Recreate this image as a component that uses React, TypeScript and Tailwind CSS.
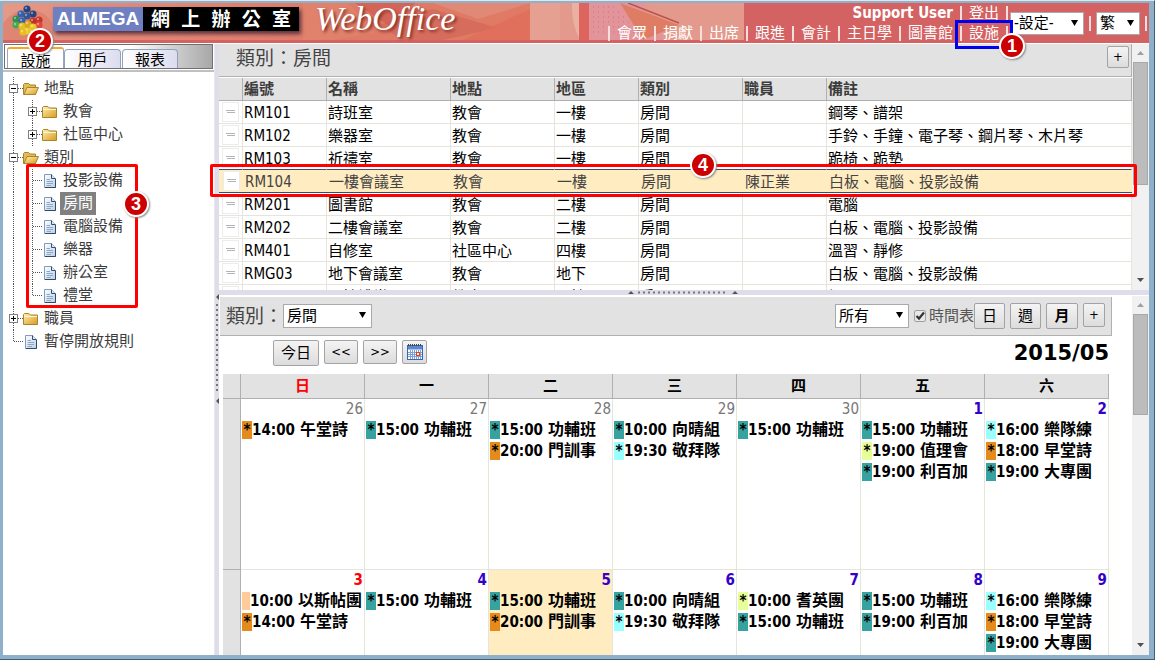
import React from "react";

const FONT =
  "font-['DejaVu_Sans_Condensed','Noto_Sans_CJK_TC',sans-serif] text-[15px] leading-5 text-black";

/* ---------- shared controls ---------- */

type ButtonProps = {
  children: React.ReactNode;
  className?: string;
  label?: string;
};

function Button({ children, className = "", label }: ButtonProps) {
  return (
    <button
      type="button"
      aria-label={label}
      className={`flex shrink-0 items-center justify-center rounded-[2px] border border-[#a3a3a3] bg-linear-to-b from-[#f4f4f4] to-[#dcdcdc] ${className}`}
    >
      {children}
    </button>
  );
}

type SelectProps = { label: string; options: string[]; className?: string };

function Select({ label, options, className = "" }: SelectProps) {
  return (
    <span className={`relative inline-flex shrink-0 ${className}`}>
      <select
        aria-label={label}
        className="h-full w-full appearance-none border border-[#a9a9a9] bg-white pl-[3px] text-black"
      >
        {options.map((o) => (
          <option key={o}>{o}</option>
        ))}
      </select>
      <svg
        viewBox="0 0 7 6"
        className="pointer-events-none absolute top-2 right-1.5 h-1.5 w-[7px]"
        aria-hidden="true"
      >
        <path d="M0 0H7L3.500 6Z" fill="#000" />
      </svg>
    </span>
  );
}

function ScrollBar({ thumb }: { thumb: string }) {
  return (
    <div className="flex w-[17px] shrink-0 flex-col items-center bg-[#f1f1f1]">
      <svg viewBox="0 0 17 18" className="h-[18px] w-[17px] shrink-0" aria-hidden="true">
        <path d="M5 11L8.500 7L12 11Z" fill="#a0a0a0" />
      </svg>
      <div className={`w-[15px] shrink-0 border border-[#a8a8a8] bg-[#bcbcbc] ${thumb}`} />
      <svg viewBox="0 0 17 18" className="mt-auto h-[18px] w-[17px] shrink-0" aria-hidden="true">
        <path d="M5 6L8.500 10L12 6Z" fill="#505050" />
      </svg>
    </div>
  );
}

/* ---------- header ---------- */

function HeaderArt() {
  return (
    <svg
      viewBox="0 0 741 37"
      preserveAspectRatio="none"
      className="absolute top-0 left-0 h-[37px] w-[741px]"
      aria-hidden="true"
    >
      <defs>
        <linearGradient id="art" x1="0" x2="1">
          <stop offset="0" stopColor="#e39a88" />
          <stop offset="0.12" stopColor="#e58b77" />
          <stop offset="0.45" stopColor="#de7a66" />
          <stop offset="0.7" stopColor="#e07a64" />
          <stop offset="0.88" stopColor="#e39a8c" />
          <stop offset="1" stopColor="#e39a8c" />
        </linearGradient>
      </defs>
      <rect width="741" height="37" fill="url(#art)" />
      <path d="M0 20Q14 2 34 8T50 37H0Z" fill="#d97360" opacity="0.5" />
      <path d="M300 0H345L372 30L330 37H300Z" fill="#e0846e" opacity="0.7" />
      <path d="M352 0H412L388 24Z" fill="#c9574f" opacity="0.6" />
      <path d="M375 22L430 6L495 25L440 37H400Z" fill="#c85b50" opacity="0.4" />
      <path d="M430 0H527L475 16Z" fill="#e0907e" opacity="0.7" />
      <path d="M460 37L527 6V37Z" fill="#df6c58" opacity="0.7" />
      <rect x="527" width="50" height="37" fill="#e39a8c" />
      <rect x="527" width="30" height="37" fill="#e6a092" />
      <path d="M569 0H576V37H577Q568 20 569 0Z" fill="#eab0a2" />
      <rect x="576" width="10" height="37" fill="#dd655d" />
      <path d="M586 0H640L660 37H586Z" fill="#e2949a" />
      <path d="M617 0L676 22L640 37Z" fill="#df7d64" />
      <path d="M625 0L676 20" stroke="#b8564c" strokeWidth="1.500" />
      <path
        d="M590 4H612M590 9H618M590 14H624M590 19H628M590 24H632M590 29H636"
        stroke="#c9707a"
        strokeDasharray="1 4"
      />
    </svg>
  );
}

function LogoMark() {
  const balls: [number, number, string][] = [
    [16, 5, "#26437f"],
    [10, 10, "#3561ad"],
    [22, 10, "#26437f"],
    [16, 12, "#2f5597"],
    [5, 15, "#2f8f4f"],
    [11, 17, "#3561ad"],
    [22, 17, "#c03028"],
    [28, 16, "#c8342a"],
    [5, 21, "#49a84f"],
    [28, 21, "#e2463a"],
    [11, 22, "#e6c020"],
    [17, 20, "#d8a818"],
    [22, 23, "#e8c828"],
    [16, 27, "#f0d030"],
    [12, 28, "#e6c020"],
    [21, 28, "#e6c020"],
  ];
  return (
    <svg viewBox="0 0 34 34" className="h-[34px] w-[34px] shrink-0" aria-hidden="true">
      {balls.map(([x, y, c]) => (
        <g key={`${x}-${y}`}>
          <circle cx={x} cy={y} r="3.600" fill={c} />
          <circle cx={x - 1} cy={y - 1} r="1.200" fill="#fff" opacity="0.4" />
        </g>
      ))}
    </svg>
  );
}

function Bar() {
  return <span className="h-[15px] w-0.5 shrink-0 bg-[#f4dede]" />;
}

function NavLine({ items }: { items: string[] }) {
  return (
    <>
      {items.map((t) => (
        <React.Fragment key={t}>
          <Bar />
          <a href="#" className="shrink-0 whitespace-nowrap">
            {t}
          </a>
        </React.Fragment>
      ))}
      <Bar />
    </>
  );
}

function Header() {
  return (
    <header className="relative flex h-10 shrink-0 bg-[#d46262] text-white">
      <HeaderArt />
      <div className="relative flex h-8 items-center">
        <div className="w-[50px] pt-1 pl-2">
          <LogoMark />
        </div>
        <div className="flex h-6 items-stretch bg-[#6f80c2] shadow-[2px_3px_4px_#5a3040]">
          <span className="flex w-[90px] items-center justify-center font-['Liberation_Sans',sans-serif] text-[19px] font-bold">
            ALMEGA
          </span>
          <span className="flex w-[156px] items-center justify-between bg-black px-2 text-[19px] font-bold">
            {"網上辦公室".split("").map((c) => (
              <span key={c}>{c}</span>
            ))}
          </span>
        </div>
        <span className="pl-4 font-['Liberation_Serif',serif] text-[34px] leading-10 italic [text-shadow:2px_2px_3px_#803028]">
          WebOffice
        </span>
      </div>
      <nav className="relative ml-auto flex flex-col items-end">
        <div className="flex h-5 items-center gap-[7px]">
          <span className="font-bold whitespace-nowrap">Support User</span>
          <NavLine items={["登出"]} />
        </div>
        <div className="flex h-5 items-center gap-[7px]">
          <NavLine
            items={["會眾", "捐獻", "出席", "跟進", "會計", "主日學", "圖書館", "設施"]}
          />
        </div>
      </nav>
      <div className="relative flex items-center gap-[5px] px-0.5">
        <Select label="設定" options={["-設定-"]} className="h-[23px] w-[74px]" />
        <Bar />
        <Select label="語言" options={["繁"]} className="h-[23px] w-11" />
        <Bar />
      </div>
    </header>
  );
}

/* ---------- sidebar ---------- */

type Guide = "line" | "tee" | "end" | "minus" | "plus" | "blank";

function GuideCell({ kind }: { kind: Guide }) {
  const box = kind === "minus" || kind === "plus";
  return (
    <svg viewBox="0 0 19 23" className="h-[23px] w-[19px] shrink-0" aria-hidden="true">
      {kind !== "blank" && (
        <path
          d={kind === "end" ? "M9.500 0V12" : "M9.500 0V23"}
          stroke="#555"
          strokeDasharray="1 1"
        />
      )}
      {kind !== "blank" && kind !== "line" && (
        <path d="M10 11.500H19" stroke="#555" strokeDasharray="1 1" />
      )}
      {box && <rect x="5.500" y="7.500" width="8" height="8" fill="#fff" stroke="#808080" />}
      {box && <path d="M7 11.500H12" stroke="#000" />}
      {kind === "plus" && <path d="M9.500 9V14" stroke="#000" />}
    </svg>
  );
}

function TreeIcon({ kind }: { kind: "open" | "closed" | "doc" }) {
  return (
    <svg viewBox="0 0 18 18" className="h-[18px] w-[18px] shrink-0" aria-hidden="true">
      <defs>
        <linearGradient id="fold" x1="0" y1="0" x2="1" y2="1">
          <stop offset="0" stopColor="#fff0b0" />
          <stop offset="1" stopColor="#d99a20" />
        </linearGradient>
        <linearGradient id="page" x1="0" y1="0" x2="1" y2="1">
          <stop offset="0" stopColor="#ffffff" />
          <stop offset="1" stopColor="#b9d0ea" />
        </linearGradient>
      </defs>
      {kind === "closed" && (
        <>
          <path d="M.5 14.500V4.500L1.500 3.500H6L7.500 5H14.500V14.500Z" fill="url(#fold)" stroke="#a8842c" />
          <path d="M1 6.500H14" stroke="#fff6cf" />
        </>
      )}
      {kind === "open" && (
        <>
          <path d="M.5 14.500V4.500L1.500 3.500H5.500L7 5H12.500V14.500Z" fill="#e6bc50" stroke="#a8842c" />
          <path d="M1 14.500L4 7.500H15.500L12.500 14.500Z" fill="url(#fold)" stroke="#a8842c" />
        </>
      )}
      {kind === "doc" && (
        <>
          <path d="M2.500 2.500H9.500L13.500 6.500V15.500H2.500Z" fill="url(#page)" stroke="#7f9bbd" />
          <path d="M9.500 2.500V6.500H13.500" fill="#dce8f6" stroke="#33506e" />
          <path d="M13.500 7V15.500H3" fill="none" stroke="#2f4a68" />
          <path d="M4.500 7.500H8M4.500 9.500H11M4.500 11.500H11M4.500 13.500H9" stroke="#8fa5c0" />
        </>
      )}
    </svg>
  );
}

type Node = {
  guides: Guide[];
  icon: "open" | "closed" | "doc";
  label: string;
  active?: boolean;
};

const TREE: Node[] = [
  { guides: ["minus"], icon: "open", label: "地點" },
  { guides: ["line", "plus"], icon: "closed", label: "教會" },
  { guides: ["line", "plus"], icon: "closed", label: "社區中心" },
  { guides: ["minus"], icon: "open", label: "類別" },
  { guides: ["line", "tee"], icon: "doc", label: "投影設備" },
  { guides: ["line", "tee"], icon: "doc", label: "房間", active: true },
  { guides: ["line", "tee"], icon: "doc", label: "電腦設備" },
  { guides: ["line", "tee"], icon: "doc", label: "樂器" },
  { guides: ["line", "tee"], icon: "doc", label: "辦公室" },
  { guides: ["line", "end"], icon: "doc", label: "禮堂" },
  { guides: ["plus"], icon: "closed", label: "職員" },
  { guides: ["end"], icon: "doc", label: "暫停開放規則" },
];

function Sidebar() {
  return (
    <aside className="flex w-[211px] shrink-0 flex-col overflow-hidden">
      <div className="mx-px flex h-[25px] shrink-0 items-end overflow-hidden border border-[#707070] bg-linear-to-r from-white from-60% to-[#a8a8a8] pl-0.5">
        <button
          type="button"
          className="h-[21px] w-[57px] rounded-t-[3px] border-t-2 border-r border-l border-t-[#f5a623] border-r-[#9aa5c0] border-l-[#9aa5c0] bg-white leading-6"
        >
          設施
        </button>
        <button
          type="button"
          className="h-[19px] w-[57px] rounded-t-[4px] border border-b-0 border-[#8fa3b8] bg-linear-to-r from-white to-[#dcdcf0] leading-5"
        >
          用戶
        </button>
        <button
          type="button"
          className="ml-px h-[19px] w-[56px] rounded-t-[4px] border border-b-0 border-[#8fa3b8] bg-linear-to-r from-white to-[#dcdcf0] leading-5"
        >
          報表
        </button>
      </div>
      <div className="mt-px h-0.5 shrink-0 bg-[#c0c0c0]" />
      <ul className="pt-[5px] pl-px text-[#3c3c3c]">
        {TREE.map((n) => (
          <li key={n.label} className="flex h-[23px] items-center">
            {n.guides.map((g, i) => (
              <GuideCell key={i} kind={g} />
            ))}
            <TreeIcon kind={n.icon} />
            <a
              href="#"
              className={
                n.active
                  ? "bg-[#808080] px-[3px] leading-[23px] text-white"
                  : "px-[3px] leading-[23px]"
              }
            >
              {n.label}
            </a>
          </li>
        ))}
      </ul>
    </aside>
  );
}

/* ---------- room list ---------- */

type Room = {
  id: string;
  name: string;
  place: string;
  area: string;
  staff?: string;
  note: string;
};

const ROOMS: Room[] = [
  { id: "RM101", name: "詩班室", place: "教會", area: "一樓", note: "鋼琴、譜架" },
  { id: "RM102", name: "樂器室", place: "教會", area: "一樓", note: "手鈴、手鐘、電子琴、鋼片琴、木片琴" },
  { id: "RM103", name: "祈禱室", place: "教會", area: "一樓", note: "跪椅、跪墊" },
  { id: "RM104", name: "一樓會議室", place: "教會", area: "一樓", staff: "陳正業", note: "白板、電腦、投影設備" },
  { id: "RM201", name: "圖書館", place: "教會", area: "二樓", note: "電腦" },
  { id: "RM202", name: "二樓會議室", place: "教會", area: "二樓", note: "白板、電腦、投影設備" },
  { id: "RM401", name: "自修室", place: "社區中心", area: "四樓", note: "溫習、靜修" },
  { id: "RMG03", name: "地下會議室", place: "教會", area: "地下", note: "白板、電腦、投影設備" },
  { id: "RMG04", name: "二樓禮堂", place: "教會", area: "二樓", note: "鋼琴" },
];

const SELECTED = 3;

function RoomList() {
  return (
    <section className="flex h-[246px] shrink-0 overflow-hidden">
      <div className="min-w-0 flex-1">
        <div className="mb-px flex h-[33px] items-start justify-between border-r border-b border-[#b0b0b0] bg-[#e2e2e2] pr-0.5 pl-[17px]">
          <h1 className="text-[19px] leading-[29px] text-[#444]">類別：房間</h1>
          <Button className="mt-0.5 h-[22px] w-[22px] text-[13px]">+</Button>
        </div>
        <table className="w-full table-fixed border-separate border-spacing-0 text-left">
          <colgroup>
            <col className="w-6" />
            <col className="w-[84px]" />
            <col className="w-[124px]" />
            <col className="w-[104px]" />
            <col className="w-[84px]" />
            <col className="w-[104px]" />
            <col className="w-[84px]" />
            <col />
          </colgroup>
          <thead className="bg-[#e2e2e2] text-[#3c3c3c]">
            <tr className="h-[23px]">
              {["", "編號", "名稱", "地點", "地區", "類別", "職員", "備註"].map((h) => (
                <th
                  key={h}
                  className="overflow-hidden border-r border-b border-[#b0b0b0] p-0 pl-px font-bold"
                >
                  {h}
                </th>
              ))}
            </tr>
          </thead>
          <tbody>
            {ROOMS.map((r, i) => {
              const on = i === SELECTED;
              const edge = on
                ? "border-b border-b-[#46466e] bg-[#ffecc0] pl-0.5"
                : i === SELECTED - 1
                  ? "border-r border-b border-r-[#e5e5dc] border-b-[#46466e] pl-px"
                  : "border-r border-b border-[#e5e5dc] pl-px";
              return (
                <tr key={r.id} className={on ? "h-[23px] text-[#444]" : "h-[23px]"}>
                  <td className={`py-0 pr-0 ${edge}`}>
                    <svg viewBox="0 0 18 20" className="ml-0.5 h-5 w-[18px]" aria-hidden="true">
                      <rect x=".5" y=".5" width="16" height="19" fill="#fff" stroke="#ececec" />
                      <path d="M4 8.500H13M5 10.500H13" stroke="#b4b4b4" />
                    </svg>
                  </td>
                  {[r.id, r.name, r.place, r.area, "房間", r.staff ?? "", r.note].map((v, k) => (
                    <td key={k} className={`pt-0.5 pr-0 pb-0 whitespace-nowrap ${edge}`}>
                      {v}
                    </td>
                  ))}
                </tr>
              );
            })}
          </tbody>
        </table>
      </div>
      <ScrollBar thumb="h-[123px]" />
    </section>
  );
}

/* ---------- calendar ---------- */

const TEAL = "bg-[#36a3a0]";
const ORANGE = "bg-[#e58b1b]";
const CYAN = "bg-[#99ffff]";
const LIME = "bg-[#e6ff99]";
const PEACH = "bg-[#ffcc99]";

type Entry = [string, string, string];
type Day = { n: number; tone: string; today?: boolean; items: Entry[] };

const DIM = "text-[#777]";
const BLUE = "font-bold text-[#3300cc]";
const RED = "font-bold text-[#ff0000]";

const WEEKS: Day[][] = [
  [
    { n: 26, tone: DIM, items: [[ORANGE, "14:00", "午堂詩"]] },
    { n: 27, tone: DIM, items: [[TEAL, "15:00", "功輔班"]] },
    { n: 28, tone: DIM, items: [[TEAL, "15:00", "功輔班"], [ORANGE, "20:00", "門訓事"]] },
    { n: 29, tone: DIM, items: [[TEAL, "10:00", "向晴組"], [CYAN, "19:30", "敬拜隊"]] },
    { n: 30, tone: DIM, items: [[TEAL, "15:00", "功輔班"]] },
    { n: 1, tone: BLUE, items: [[TEAL, "15:00", "功輔班"], [LIME, "19:00", "值理會"], [TEAL, "19:00", "利百加"]] },
    { n: 2, tone: BLUE, items: [[CYAN, "16:00", "樂隊練"], [ORANGE, "18:00", "早堂詩"], [TEAL, "19:00", "大專團"]] },
  ],
  [
    { n: 3, tone: RED, items: [[PEACH, "10:00", "以斯帖團"], [ORANGE, "14:00", "午堂詩"]] },
    { n: 4, tone: BLUE, items: [[TEAL, "15:00", "功輔班"]] },
    { n: 5, tone: BLUE, today: true, items: [[TEAL, "15:00", "功輔班"], [ORANGE, "20:00", "門訓事"]] },
    { n: 6, tone: BLUE, items: [[TEAL, "10:00", "向晴組"], [CYAN, "19:30", "敬拜隊"]] },
    { n: 7, tone: BLUE, items: [[LIME, "10:00", "耆英團"], [TEAL, "15:00", "功輔班"]] },
    { n: 8, tone: BLUE, items: [[TEAL, "15:00", "功輔班"], [TEAL, "19:00", "利百加"]] },
    { n: 9, tone: BLUE, items: [[CYAN, "16:00", "樂隊練"], [ORANGE, "18:00", "早堂詩"], [TEAL, "19:00", "大專團"]] },
  ],
];

function CalendarIcon() {
  return (
    <svg viewBox="0 0 16 16" className="h-4 w-4" aria-hidden="true">
      <rect x=".5" y="1.500" width="15" height="14" fill="#fff" stroke="#3a66b4" />
      <rect x="1" y="2" width="14" height="3.500" fill="#5b86d0" />
      <path d="M1 1H15" stroke="#444" strokeWidth="2" strokeDasharray="1 1" />
      <path
        d="M1 8.500H15M1 10.500H15M1 12.500H15M3.500 6V15M5.500 6V15M7.500 6V15M9.500 6V15M11.500 6V15M13.500 6V15"
        stroke="#7d9fd6"
      />
      <rect x="9.500" y="8.500" width="3" height="3" fill="#fff" stroke="#e04020" />
    </svg>
  );
}

function Calendar() {
  return (
    <section className="flex min-h-0 flex-1 overflow-hidden">
      <div className="min-w-0 flex-1 pt-px pr-5 pl-px">
        <div className="flex h-[39px] items-center border-r border-b border-[#b0b0b0] bg-[#e2e2e2] pr-1.5 pl-1.5">
          <h2 className="w-[57px] text-[19px] text-[#444]">類別：</h2>
          <Select label="類別" options={["房間"]} className="h-6 w-[89px]" />
          <Select label="顯示" options={["所有"]} className="ml-auto h-6 w-[74px]" />
          <label className="ml-[5px] flex shrink-0 items-center gap-[3px] text-[#555]">
            <span className="relative flex h-3 w-3">
              <input
                type="checkbox"
                defaultChecked
                className="peer h-3 w-3 appearance-none rounded-[2px] border border-[#a0a0a0] bg-[#e8e8e8]"
              />
              <svg
                viewBox="0 0 12 12"
                className="pointer-events-none absolute inset-0 hidden h-3 w-3 peer-checked:block"
                aria-hidden="true"
              >
                <path d="M2.500 6L5 8.500L10 2.500" fill="none" stroke="#333" strokeWidth="2.200" />
              </svg>
            </span>
            時間表
          </label>
          <div className="flex items-start gap-[5px]">
            <Button className="h-[26px] w-[31px]">日</Button>
            <Button className="h-[26px] w-[31px]">週</Button>
            <Button className="h-[26px] w-8 font-bold">月</Button>
            <Button className="h-6 w-[22px] text-[13px]">+</Button>
          </div>
        </div>
        <div className="flex h-[38px] items-start gap-[5px] pt-1 pr-[3px] pl-[53px]">
          <Button className="h-[26px] w-[46px]">今日</Button>
          <Button className="h-6 w-[34px] text-[13px]">&lt;&lt;</Button>
          <Button className="h-6 w-[34px] text-[13px]">&gt;&gt;</Button>
          <Button label="選擇日期" className="h-6 w-[25px]">
            <CalendarIcon />
          </Button>
          <h3 className="ml-auto font-['DejaVu_Sans',sans-serif] text-[21px] leading-[26px] font-bold">
            2015/05
          </h3>
        </div>
        <div className="px-[3px]">
          <table className="w-full table-fixed border-separate border-spacing-0">
            <colgroup>
              <col className="w-[18px]" />
              <col span={7} />
            </colgroup>
            <thead>
              <tr className="h-[25px] bg-[#e2e2e2]">
                {["", "日", "一", "二", "三", "四", "五", "六"].map((d) => (
                  <th
                    key={d}
                    className={`border-r border-b border-[#b0b0b0] p-0 font-bold ${d === "日" ? "text-[#ff0000]" : ""}`}
                  >
                    {d}
                  </th>
                ))}
              </tr>
            </thead>
            <tbody>
              {WEEKS.map((week, w) => (
                <tr key={w} className="h-[171px] align-top">
                  <td className="border-r border-b border-[#b0b0b0] bg-[#e2e2e2] p-0" />
                  {week.map((d) => (
                    <td
                      key={d.n}
                      className={`border-r border-b border-[#e5e5dc] p-0 pl-px ${d.today ? "bg-[#ffecc0]" : ""}`}
                    >
                      <div className={`pr-px text-right ${d.tone}`}>{d.n}</div>
                      {d.items.map(([color, time, name]) => (
                        <div
                          key={time + name}
                          className="flex h-[21px] items-center font-bold whitespace-nowrap"
                        >
                          <span
                            className={`h-[18px] shrink-0 text-center leading-[18px] ${color === PEACH ? "w-2" : "w-2.5"} ${color}`}
                          >
                            {color === PEACH ? "" : "*"}
                          </span>
                          <span>{time}</span>
                          <span className="pl-[5px] text-base leading-5">{name}</span>
                        </div>
                      ))}
                    </td>
                  ))}
                </tr>
              ))}
            </tbody>
          </table>
        </div>
      </div>
      <ScrollBar thumb="h-[101px]" />
    </section>
  );
}

/* ---------- callouts ---------- */

function Badge({ n, className }: { n: number; className: string }) {
  return (
    <span
      className={`absolute flex h-[26px] w-[26px] items-center justify-center rounded-full border-2 border-white bg-[#cc0000] font-['Liberation_Sans',sans-serif] text-[18px] leading-none font-bold text-white shadow-[1px_1px_2px_#888] ${className}`}
    >
      {n}
    </span>
  );
}

export default function App() {
  return (
    <div
      className={`relative flex h-screen overflow-hidden border-t border-r border-b border-[#3f5f78] border-t-[#dfe6ec] bg-[#8fb0c8] pt-0.5 pr-[5px] pb-1 pl-[3px] ${FONT}`}
    >
      <div className="flex min-w-0 flex-1 flex-col gap-px bg-white">
        <Header />
        <main className="flex min-h-0 flex-1">
          <Sidebar />
          <div className="flex w-[5px] shrink-0 flex-col items-center border-l border-[#e8e8e8] bg-[#dedeea] pt-[248px]">
            <svg viewBox="0 0 4 116" className="h-[116px] w-1" aria-hidden="true">
              <path d="M4 2V8L1 5ZM4 106V112L1 109Z" fill="#555" />
              <path d="M2 12V102" stroke="#777" strokeWidth="2" strokeDasharray="2 3" />
            </svg>
          </div>
          <div className="flex min-w-0 flex-1 flex-col">
            <RoomList />
            <div className="flex h-1.5 shrink-0 justify-center border-b border-white bg-[#dedeea]">
              <svg viewBox="0 0 116 5" className="h-[5px] w-[116px]" aria-hidden="true">
                <path d="M2 4H8L5 1ZM106 4H112L109 1Z" fill="#555" />
                <path d="M12 2.500H102" stroke="#777" strokeWidth="2" strokeDasharray="2 3" />
              </svg>
            </div>
            <Calendar />
          </div>
        </main>
      </div>

      <div className="pointer-events-none absolute top-[19px] right-[141px] h-[29px] w-[58px] border-3 border-[#0000f0]" />
      <div className="pointer-events-none absolute top-[163px] left-[26px] h-36 w-28 rounded-[2px] border-3 border-[#ff0000]" />
      <div className="pointer-events-none absolute top-[163px] right-[17px] left-[210px] h-[33px] rounded-[2px] border-3 border-[#ff0000]" />
      <Badge n={1} className="top-8 right-[129px]" />
      <Badge n={2} className="top-[27px] left-[27px]" />
      <Badge n={3} className="top-[190px] left-[123px]" />
      <Badge n={4} className="top-[151px] left-[690px]" />
    </div>
  );
}
